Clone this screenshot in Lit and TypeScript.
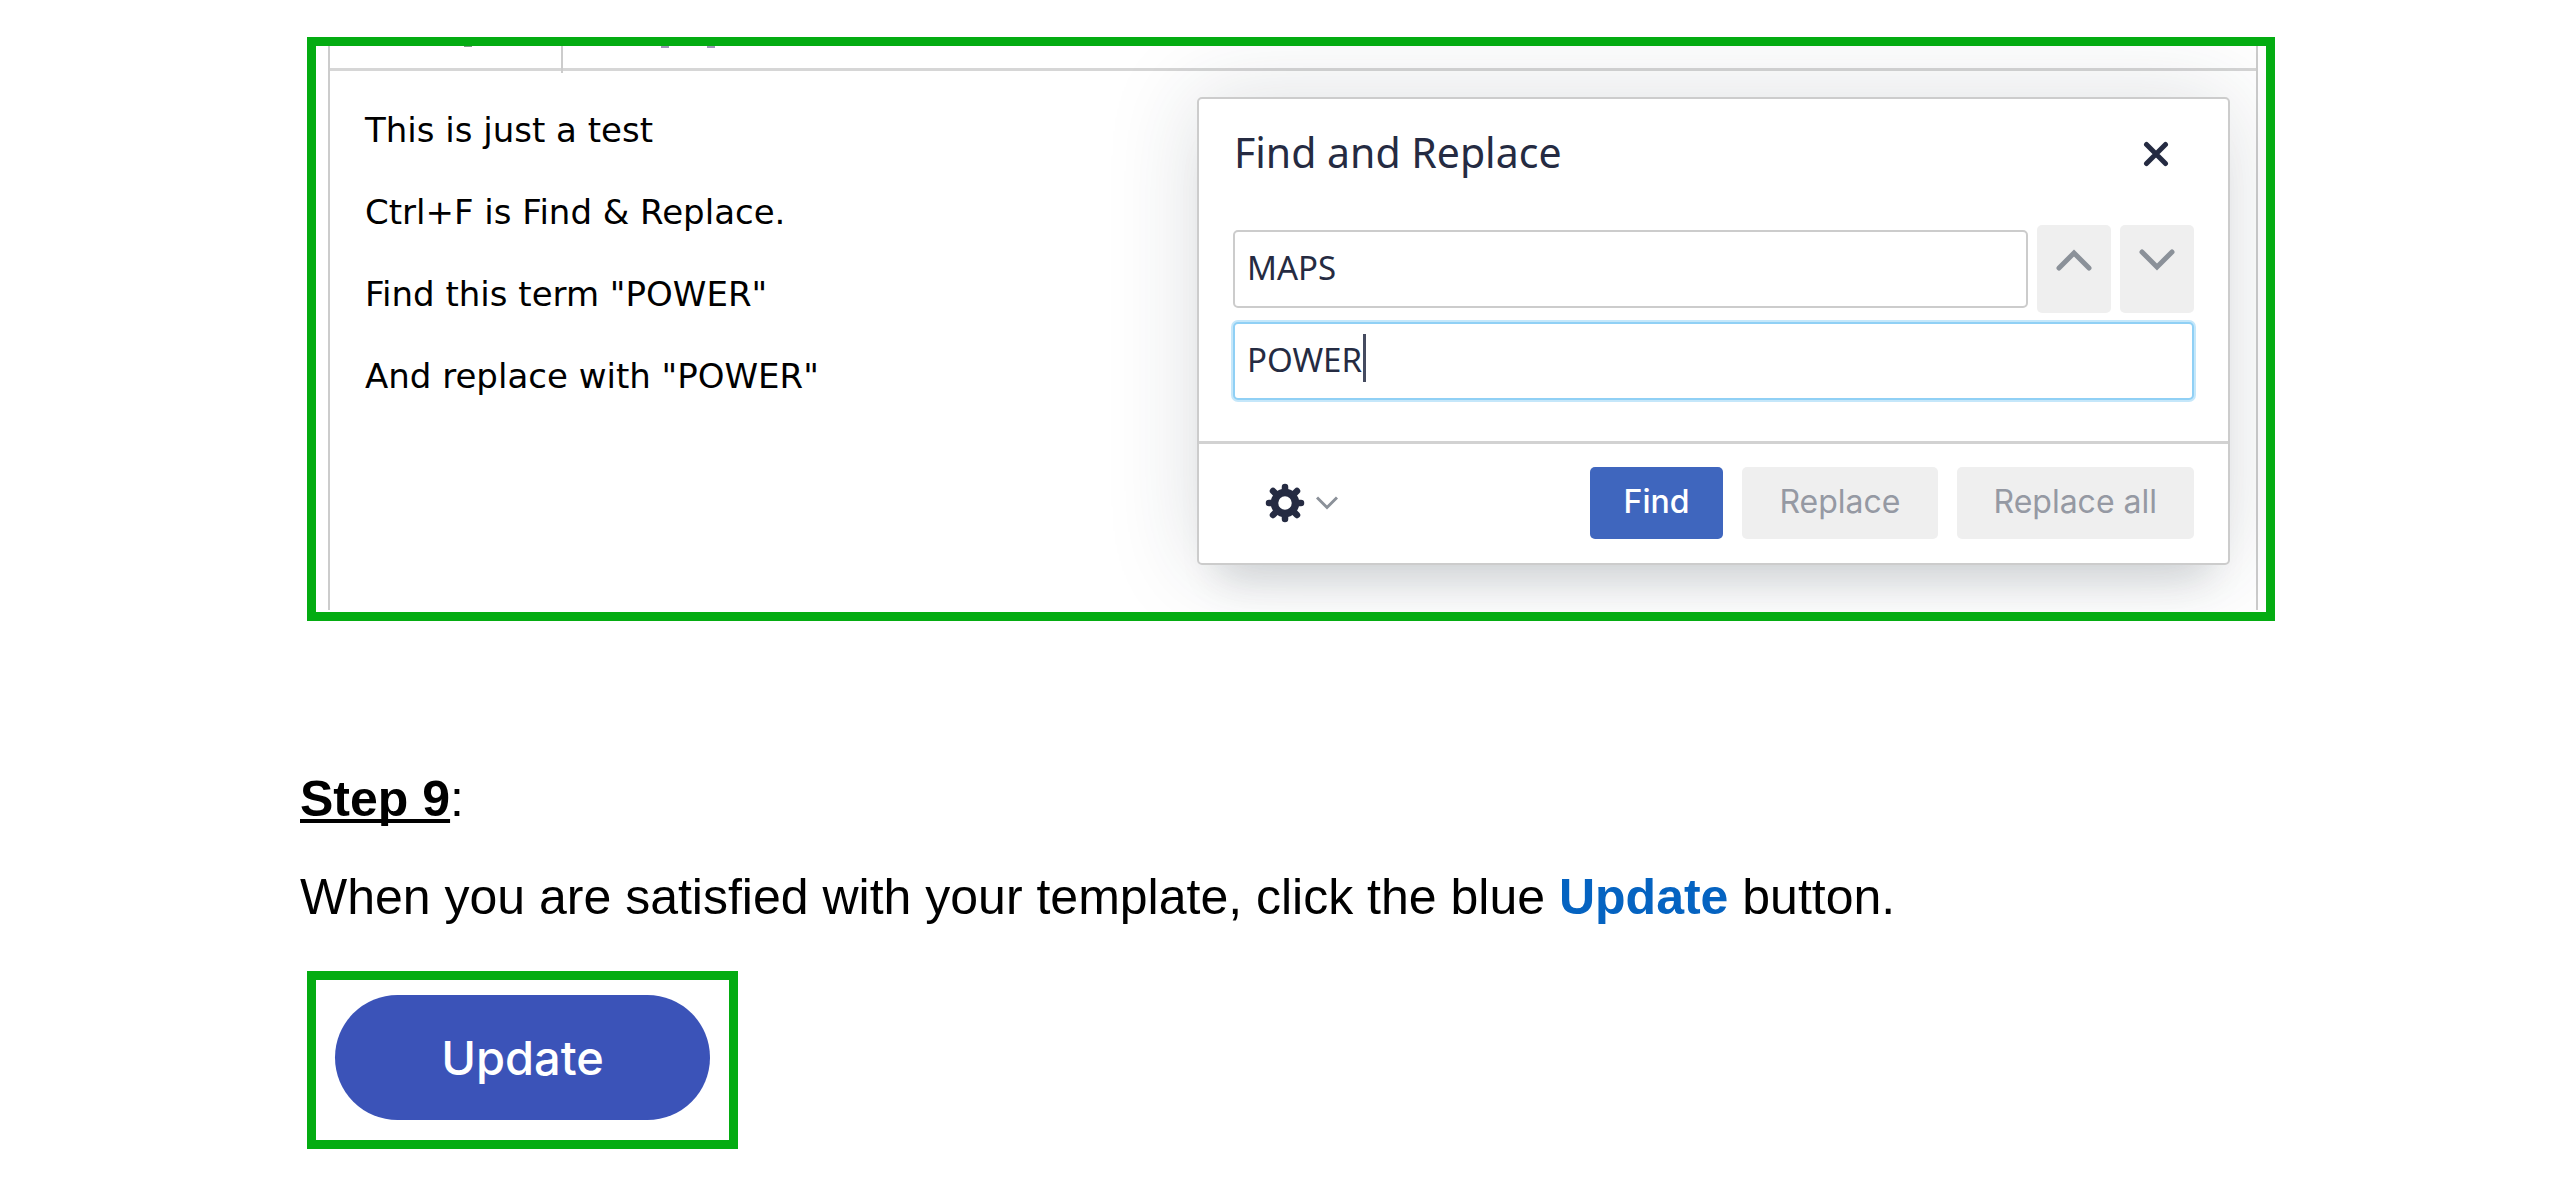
import { LitElement, html, css } from "lit";
import { customElement } from "lit/decorators.js";

/** Floating "Find and Replace" window of the template editor. */
@customElement("find-dialog")
class FindDialog extends LitElement {
  static styles = css`
    :host {
      display: block;
      flex: 0 1 1033px;
    }
    * {
      box-sizing: border-box;
    }
    .dialog {
      background: #fff;
      border: 2px solid #ccc;
      border-radius: 5px;
      color: #252b42;
      box-shadow:
        0 36px 36px -22px rgba(34, 47, 62, 0.15),
        0 0 90px 2px rgba(34, 47, 62, 0.15);
    }
    .head {
      display: flex;
      justify-content: space-between;
      align-items: center;
      padding: 26px 55px 0 35px;
    }
    .title {
      margin: 0;
      padding-bottom: 4px;
      font: 400 41px/54px "Noto Sans", sans-serif;
    }
    button {
      margin: 0;
      padding: 0;
      border: 0;
      border-radius: 5px;
      background: none;
      color: inherit;
    }
    svg {
      display: block;
      fill: none;
      stroke: currentColor;
    }
    .close {
      padding: 4px;
    }
    .fields {
      display: grid;
      gap: 9px;
      padding: 42px 34px 41px;
    }
    .row {
      display: flex;
      align-items: center;
      gap: 9px;
    }
    .field {
      flex: 1;
      position: relative;
    }
    input {
      display: block;
      width: 100%;
      height: 78px;
      padding: 0 12px 4px;
      border: 2px solid #ccc;
      border-radius: 5px;
      outline: 0;
      background: #fff;
      color: #252b42;
      font: 400 33px/44px "Noto Sans", sans-serif;
    }
    .active {
      border-color: #90d0f5;
      box-shadow: 0 0 0 2px #c5e7fa;
    }
    .caret {
      position: absolute;
      left: 130px;
      top: 12px;
      width: 3px;
      height: 48px;
      background: #454b60;
    }
    .step {
      display: flex;
      justify-content: center;
      width: 74px;
      height: 88px;
      padding-top: 23px;
      align-items: flex-start;
      background: #efefef;
      color: #8b9199;
    }
    .foot {
      display: flex;
      align-items: center;
      gap: 19px;
      padding: 23px 34px 24px;
      border-top: 3px solid #d2d2d2;
    }
    .options {
      display: flex;
      align-items: center;
      gap: 11px;
      margin: 0 auto 0 32px;
    }
    .options .caret-down {
      color: #8b9199;
    }
    .action {
      height: 72px;
      padding: 0 37px 2px;
      background: #efefef;
      color: #9599a3;
      font: 400 32px/40px Inter, sans-serif;
    }
    .primary {
      padding: 0 34px 2px;
      background: #3f66be;
      color: #fff;
      font-weight: 500;
    }
  `;

  render() {
    return html`
      <section class="dialog" role="dialog" aria-labelledby="title">
        <header class="head">
          <h2 class="title" id="title">Find and Replace</h2>
          <button class="close" aria-label="Close">
            <svg width="26" height="26" viewBox="0 0 26 26" stroke-width="5" stroke-linecap="round">
              <path d="M3.5 3.5 22.5 22.5M22.5 3.5 3.5 22.5" />
            </svg>
          </button>
        </header>
        <div class="fields">
          <div class="row">
            <div class="field"><input aria-label="Find" .value=${"MAPS"} /></div>
            <button class="step" aria-label="Previous">
              <svg width="38" height="24" viewBox="0 0 38 24" stroke-width="5" stroke-linecap="round">
                <path d="M4 20 19 5 34 20" />
              </svg>
            </button>
            <button class="step" aria-label="Next">
              <svg width="38" height="24" viewBox="0 0 38 24" stroke-width="5" stroke-linecap="round">
                <path d="M4 4 19 19 34 4" />
              </svg>
            </button>
          </div>
          <div class="field">
            <input class="active" aria-label="Replace with" .value=${"POWER"} />
            <span class="caret"></span>
          </div>
        </div>
        <footer class="foot">
          <button class="options" aria-label="Options">
            <svg width="40" height="40" viewBox="-20 -20 40 40">
              <circle r="10.5" stroke-width="7.5" />
              <path
                stroke-width="6.5"
                stroke-linecap="round"
                d="M0-12V-16M0 12V16M-12 0H-16M12 0H16M-9-9-12-12M9-9 12-12M-9 9-12 12M9 9 12 12"
              />
            </svg>
            <svg class="caret-down" width="22" height="14" viewBox="0 0 22 14" stroke-width="3">
              <path d="M1 1.5 11 11.5 21 1.5" />
            </svg>
          </button>
          <button class="action primary">Find</button>
          <button class="action" disabled>Replace</button>
          <button class="action" disabled>Replace all</button>
        </footer>
      </section>
    `;
  }
}

const LINES = [
  "This is just a test",
  "Ctrl+F is Find & Replace.",
  'Find this term "POWER"',
  'And replace with "POWER"',
];

@customElement("app-root")
class AppRoot extends LitElement {
  static styles = css`
    :host {
      display: block;
      background: #fff;
      color: #000;
      font: 400 50px/58px "Liberation Sans", Arial, sans-serif;
    }
    * {
      box-sizing: border-box;
    }
    .page {
      padding: 37px 275px 50px 300px;
    }
    .frame {
      margin: 0 0 0 7px;
      border: 9px solid #04ac12;
      overflow: hidden;
    }
    .shot {
      padding: 0 8px 2px 12px;
    }
    .editor {
      border: solid #ccc;
      border-width: 0 2px;
    }
    .toolbar {
      display: flex;
      align-items: flex-start;
      height: 25px;
      border-bottom: 3px solid #d6d6d6;
    }
    .tab {
      display: flex;
      gap: 38px;
      width: 233px;
      height: 27px;
      padding-left: 134px;
      border-right: 2px solid #ccc;
    }
    .tab.open {
      width: auto;
      padding-left: 98px;
      border: 0;
    }
    .tail {
      width: 8px;
      height: 1px;
      background: #7d9a86;
    }
    .open .tail {
      height: 2px;
      background: #9a94b4;
    }
    .body {
      display: flex;
      justify-content: space-between;
      align-items: flex-start;
      gap: 40px;
      padding: 26px 26px 45px 35px;
    }
    .text {
      padding-top: 12px;
      font: 400 34px/42px "DejaVu Sans", Verdana, sans-serif;
    }
    .text p {
      margin: 0 0 40px;
    }
    .heading {
      margin: 149px 0 0;
      font-size: 50px;
      font-weight: 400;
    }
    .heading strong {
      text-decoration: underline 4px;
      text-underline-offset: 3px;
      text-decoration-skip-ink: none;
    }
    .copy {
      margin: 40px 0 45px;
    }
    .copy strong {
      color: #0563c1;
    }
    .small {
      width: fit-content;
      padding: 15px 19px 20px;
    }
    .update {
      display: block;
      min-width: 375px;
      height: 125px;
      border: 0;
      border-radius: 63px;
      background: #3b53b8;
      color: #fff;
      font: 500 47px/60px Inter, sans-serif;
    }
  `;

  render() {
    return html`
      <main class="page">
        <div class="frame shot">
          <div class="editor">
            <div class="toolbar">
              <div class="tab"><i class="tail"></i></div>
              <div class="tab open"><i class="tail"></i><i class="tail"></i></div>
            </div>
            <div class="body">
              <div class="text">${LINES.map((line) => html`<p>${line}</p>`)}</div>
              <find-dialog></find-dialog>
            </div>
          </div>
        </div>
        <h1 class="heading"><strong>Step 9</strong>:</h1>
        <p class="copy">
          When you are satisfied with your template, click the blue <strong>Update</strong> button.
        </p>
        <div class="frame small"><button class="update">Update</button></div>
      </main>
    `;
  }
}
